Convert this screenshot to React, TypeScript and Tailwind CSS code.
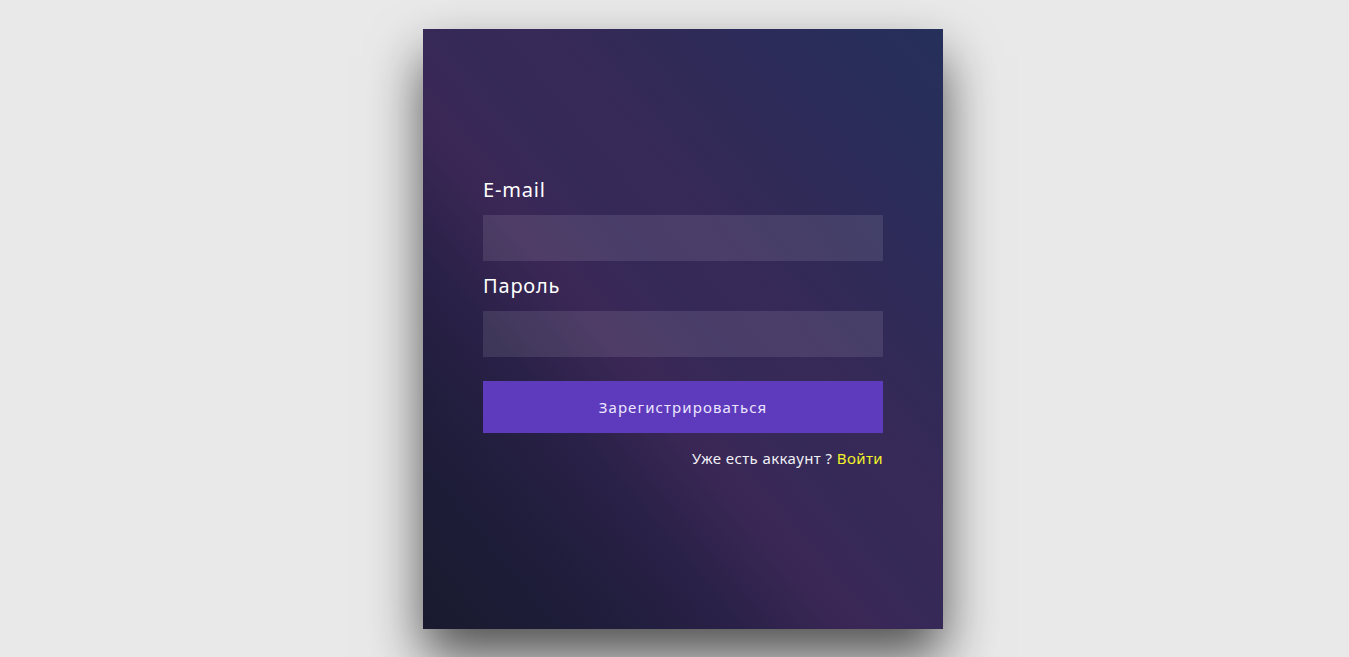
import React from "react";

export default function App() {
  return (
    <div
      className="min-h-[657px] w-full bg-[#e9e9e9] flex justify-center pl-[17px] pt-[29px]"
      style={{ fontFamily: '"Noto Sans", "Open Sans", sans-serif' }}
    >
      <div
        className="w-[520px] h-[600px] px-[60px] pt-[147px] shadow-[0_28px_50px_rgba(0,0,0,0.65)]"
        style={{
          background:
            "linear-gradient(50deg, #191a2e 0%, #1f1d3b 18%, #2a2148 31%, #3b2756 42%, #352958 52%, #372958 60%, #302a57 72%, #2b2c5a 84%, #25305a 100%)",
        }}
      >
        <form className="flex flex-col" onSubmit={(e) => e.preventDefault()}>
          <label className="text-white text-[20px] leading-[28px] tracking-[0.8px]">E-mail</label>
          <input
            className="mt-[11px] h-[46px] w-full bg-white/10 outline-none border-0 text-white px-3"
            type="email"
          />
          <label className="mt-[11px] text-white text-[20px] leading-[28px] tracking-[0.8px]">Пароль</label>
          <input
            className="mt-[11px] h-[46px] w-full bg-white/10 outline-none border-0 text-white px-3"
            type="password"
          />
          <button
            type="submit"
            className="mt-[24px] h-[52px] w-full bg-[#5e3bbd] text-[#ece6ff] text-[15px] tracking-[1.1px]"
          >
            Зарегистрироваться
          </button>
          <p className="mt-[15px] text-right text-[15px] leading-[20px] tracking-[0.4px] text-[#f0f0f5]">
            Уже есть аккаунт ? <a className="text-[#f3f32a]">Войти</a>
          </p>
        </form>
      </div>
    </div>
  );
}
